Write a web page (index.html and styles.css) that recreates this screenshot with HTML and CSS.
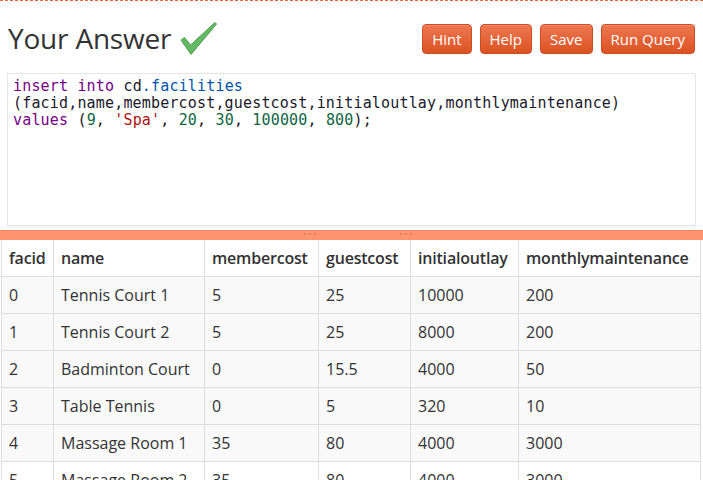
FILE: index.html
```html
<!DOCTYPE html>
<html>
<head>
<meta charset="utf-8">
<link rel="stylesheet" href="styles.css">
</head>
<body>
<div class="topline"></div>
<div class="header">
  <h1 class="title">Your Answer
    <svg class="check" width="38" height="36" viewBox="0 0 38 36">
      <polygon points="1,19 4.5,16.5 10.5,24 35,1.5 36.5,3 11,33.5" fill="#64b964" stroke="#4e9e4e" stroke-width="1" stroke-linejoin="round"/>
    </svg>
  </h1>
  <div class="buttons">
    <button class="btn">Hint</button>
    <button class="btn">Help</button>
    <button class="btn">Save</button>
    <button class="btn">Run Query</button>
  </div>
</div>
<div class="editor">
<pre class="code"><span class="kw">insert</span> <span class="kw">into</span> cd<span class="prop">.facilities</span>
(facid,name,membercost,guestcost,initialoutlay,monthlymaintenance)
<span class="kw">values</span> (<span class="num">9</span>, <span class="str">'Spa'</span>, <span class="num">20</span>, <span class="num">30</span>, <span class="num">100000</span>, <span class="num">800</span>);</pre>
</div>
<div class="splitter"><span class="dots d1"></span><span class="dots d2"></span></div>
<div class="results">
<table class="grid">
  <colgroup>
    <col class="c1"><col class="c2"><col class="c3"><col class="c4"><col class="c5"><col class="c6">
  </colgroup>
  <thead>
    <tr><th>facid</th><th>name</th><th>membercost</th><th>guestcost</th><th>initialoutlay</th><th>monthlymaintenance</th></tr>
  </thead>
  <tbody>
    <tr class="shade"><td>0</td><td>Tennis Court 1</td><td>5</td><td>25</td><td>10000</td><td>200</td></tr>
    <tr class="shade"><td>1</td><td>Tennis Court 2</td><td>5</td><td>25</td><td>8000</td><td>200</td></tr>
    <tr class="shade"><td>2</td><td>Badminton Court</td><td>0</td><td>15.5</td><td>4000</td><td>50</td></tr>
    <tr class="shade"><td>3</td><td>Table Tennis</td><td>0</td><td>5</td><td>320</td><td>10</td></tr>
    <tr class="shade"><td>4</td><td>Massage Room 1</td><td>35</td><td>80</td><td>4000</td><td>3000</td></tr>
    <tr><td>5</td><td>Massage Room 2</td><td>35</td><td>80</td><td>4000</td><td>3000</td></tr>
  </tbody>
</table>
</div>
</body>
</html>
```
FILE: styles.css
```css
html, body {
  margin: 0;
  padding: 0;
  background: #fff;
  overflow: hidden;
  height: 480px;
}
body {
  font-family: "Open Sans", "DejaVu Sans", sans-serif;
  color: #333;
}
.topline {
  height: 0;
  border-top: 1px dashed #e8663d;
}
.header {
  display: flex;
  justify-content: space-between;
  align-items: flex-start;
  padding: 0 8px 0 8px;
  height: 72px;
}
.title {
  margin: 17px 0 0 0;
  font-size: 28px;
  font-weight: normal;
  color: #333;
  line-height: 40px;
  display: flex;
  align-items: center;
  letter-spacing: -0.2px;
}
.check {
  margin-left: 9px;
  margin-top: 2px;
}
.buttons {
  display: flex;
  gap: 8px;
  margin-top: 23px;
}
.btn {
  font-family: "Open Sans", "DejaVu Sans", sans-serif;
  font-size: 15px;
  color: #fff;
  height: 30px;
  padding: 0 9px;
  border: 1px solid #d04d1f;
  border-radius: 4px;
  background: linear-gradient(#ee7751, #dc5222);
  box-shadow: inset 0 1px 0 rgba(255,255,255,0.15);
}
.editor {
  margin: 0 7px 0 7px;
  height: 151px;
  border: 1px solid #e6e6e6;
}
.code {
  margin: 0;
  padding: 4px 5px;
  font-family: "DejaVu Sans Mono", monospace;
  font-size: 15px;
  line-height: 17px;
  color: #1a1a2a;
  letter-spacing: 0.17px;
}
.kw { color: #770088; }
.prop { color: #0055aa; }
.num { color: #116644; }
.str { color: #aa1111; }
.splitter {
  position: relative;
  margin-top: 4px;
  height: 9px;
  background: #fe9570;
  border-top: 1px solid #f4845e;
}
.dots {
  position: absolute;
  top: 2px;
  width: 12px;
  height: 2px;
  background: repeating-linear-gradient(90deg, #e0805f 0 2px, transparent 2px 5px);
}
.d1 { left: 304px; }
.d2 { left: 400px; }
.results {
  padding: 0 3px 0 1px;
}
.grid {
  border-collapse: collapse;
  table-layout: fixed;
  width: 699px;
  font-size: 16px;
  color: #333;
}
.c1 { width: 52px; }
.c2 { width: 151px; }
.c3 { width: 114px; }
.c4 { width: 92px; }
.c5 { width: 108px; }
.c6 { width: 182px; }
.grid th, .grid td {
  border: 1px solid #dddddd;
  text-align: left;
  padding: 0 6px 0 7px;
  height: 36px;
  white-space: nowrap;
  overflow: hidden;
}
.grid th {
  font-weight: 600;
  background: #fff;
  border-top: 0;
  letter-spacing: -0.2px;
}
.grid td {
  font-weight: normal;
}
.grid tr.shade td {
  background: #f9f9f9;
}
```
